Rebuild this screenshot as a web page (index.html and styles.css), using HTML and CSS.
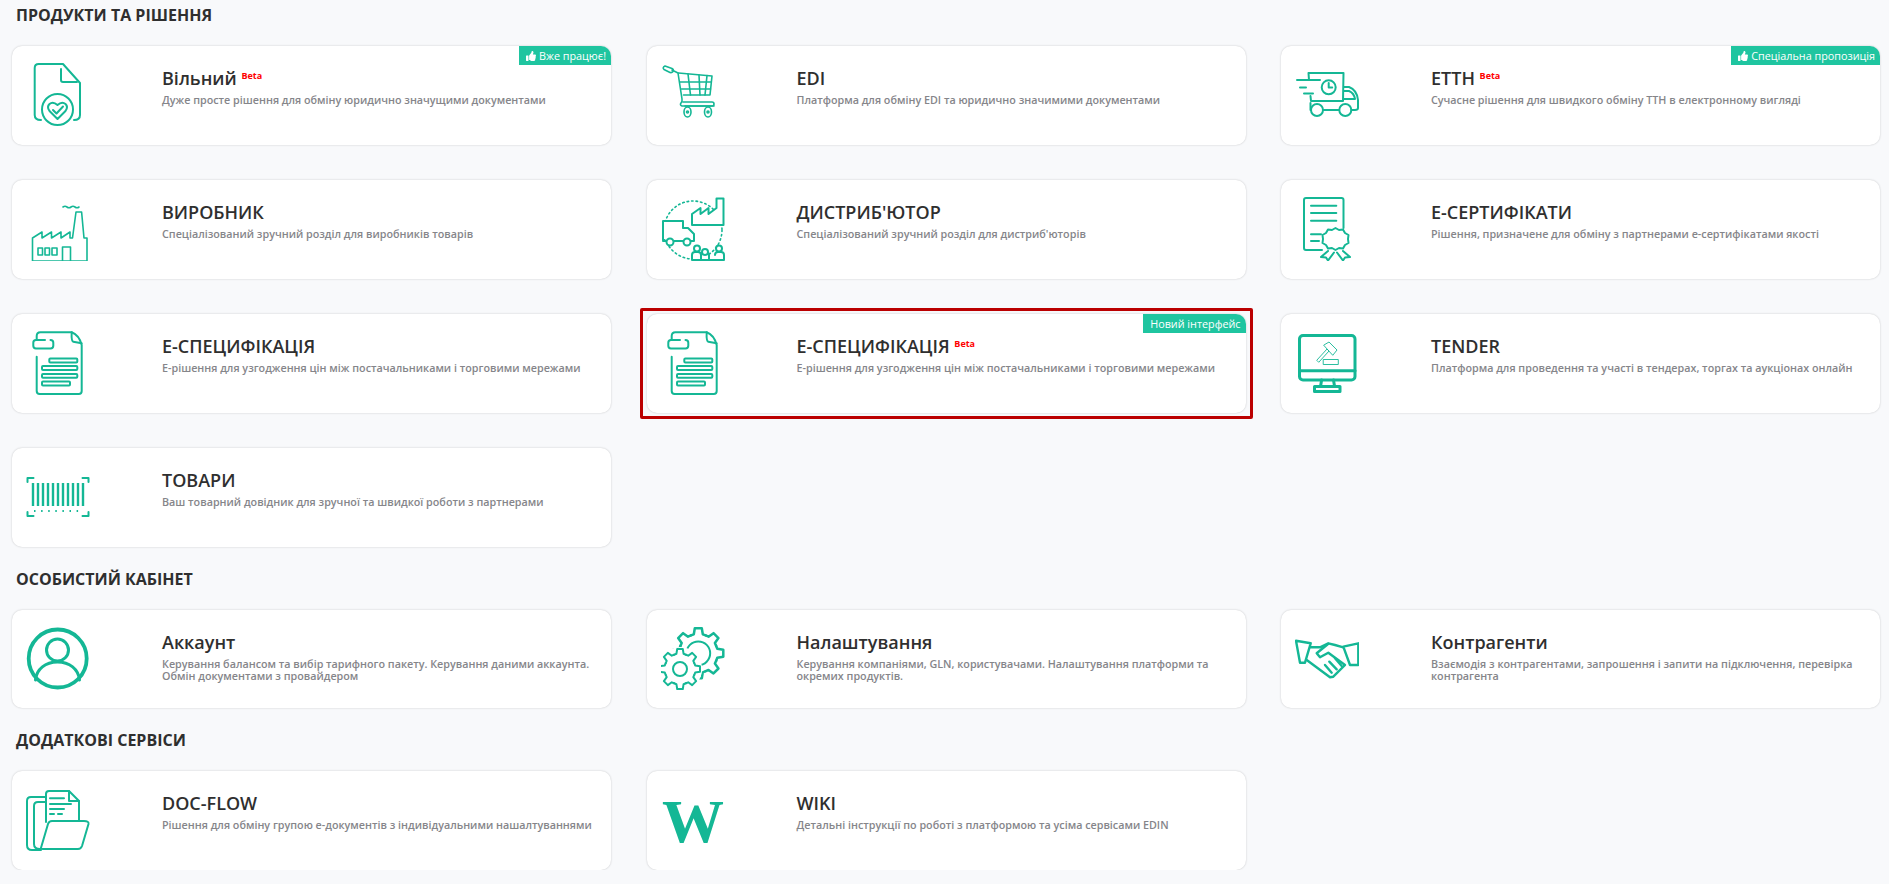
FILE: index.html
```html
<!DOCTYPE html>
<html lang="uk">
<head>
  <meta charset="UTF-8" />
  <title>EDIN</title>
  <link rel="stylesheet" href="styles.css">
</head>
<body>

  <!-- shared thumbs-up for the ribbons -->
  <svg class="defs" width="0" height="0">
    <symbol id="thumb" viewBox="0 0 512 512">
      <path d="M104 224H24c-13.255 0-24 10.745-24 24v240c0 13.255 10.745 24 24 24h80c13.255 0 24-10.745 24-24V248c0-13.255-10.745-24-24-24zM384 81.452c0 42.416-25.97 66.208-33.277 94.548h101.723c33.397 0 59.397 27.746 59.553 58.098.084 17.938-7.546 37.249-19.439 49.197l-.11.11c9.836 23.337 8.237 56.037-9.308 79.469 8.681 25.895-.069 57.704-16.382 74.757 4.298 17.598 2.244 32.575-6.148 44.632C440.202 511.587 389.616 512 346.839 512l-2.845-.001c-48.287-.017-87.806-17.598-119.56-31.725-15.957-7.099-36.821-15.887-52.651-16.178-6.54-.12-11.783-5.457-11.783-11.998v-213.77c0-3.2 1.282-6.271 3.558-8.521 39.614-39.144 56.648-80.587 89.117-113.111 14.804-14.832 20.188-37.236 25.393-58.902C282.515 39.293 291.817 0 312 0c24 0 72 8 72 81.452z"/>
    </symbol>
    <symbol id="spec" viewBox="0 0 64 64">
      <path d="M10.700 9V5q0-3.700 3.700-3.700h31.300Q53 4 55.700 14v46q0 3-3 3H13.700q-3 0-3-3V25.700"/>
      <path d="M45.700 1.300q-.5 9 1.600 9.400l8.400 1.600"/>
      <path d="M19 9H10q-2.700 0-2.700 2.700v3q0 2.700 2.700 2.700h14.500q2.800 0 2.800-2.700v-3q0-2.700-2.800-2.700"/>
      <rect x="23.300" y="27.500" width="28" height="4" rx="1"/>
      <rect x="16" y="35" width="35.300" height="4" rx="1"/>
      <rect x="16" y="43" width="35.300" height="3.700" rx="1"/>
      <rect x="16" y="50.500" width="28" height="4" rx="1"/>
    </symbol>
    <g id="cog-tooth">
      <path d="M-5.900-14.300L-3.600-15.200-2.800-20H2.800L3.600-15.200 5.900-14.300"/>
    </g>
  </svg>

  <h2 class="section-title section-title-first">ПРОДУКТИ ТА РІШЕННЯ</h2>
  <section class="cards">

    <a class="card">
      <svg class="icon" viewBox="0 0 64 64">
        <path d="M15 57q-6.300 0-6.300-5V5q0-4 4-4H37l17 19v32q0 5-6 5"/>
        <path d="M35 6v11q0 2 2 2h14"/>
        <circle cx="31.500" cy="46.500" r="15.500"/>
        <path d="M31.500 56l-8-8q-3-4 0-7 3.500-3 8 1 4.500-4 8-1 3 3 0 7z"/>
        <path d="M27 47l3.500 3.500 6.500-7"/>
      </svg>
      <div class="card-body">
        <h3 class="card-title">Вільний <span class="beta">Beta</span></h3>
        <p class="card-text">Дуже просте рішення для обміну юридично значущими документами</p>
      </div>
      <span class="ribbon"><svg class="thumb"><use href="#thumb"/></svg> Вже працює!</span>
    </a>

    <a class="card">
      <svg class="icon icon-thin" viewBox="0 0 64 64">
        <path d="M4 3l7 2.500q2 1 1 3-1 1.500-3 1L3 6.500q-2-2 1-3.500z"/>
        <path d="M11 7l6 3 4 26q.5 3-1 4-1.500 2 1 3h32"/>
        <path d="M17.500 10L51 13l-2 19H22.500"/>
        <path d="M19 19h31M20.500 26h29M27 11l2.500 21M38 12l1 20M46 12.500L44 32"/>
        <path d="M22 39h29q2 0 2 2t-2 2H24"/>
        <ellipse cx="26.500" cy="49" rx="3.500" ry="5"/>
        <ellipse cx="47" cy="49" rx="3.500" ry="5"/>
        <circle cx="26.500" cy="49" r="1"/>
        <circle cx="47" cy="49" r="1"/>
      </svg>
      <div class="card-body">
        <h3 class="card-title">EDI</h3>
        <p class="card-text">Платформа для обміну EDI та юридично значимими документами</p>
      </div>
    </a>

    <a class="card">
      <svg class="icon" viewBox="0 0 64 64">
        <path d="M14 17l-.5-7h35l-.500 28H16l-.5-5"/>
        <path d="M2 17h23M5 24.500h6M9 30.500h9"/>
        <circle cx="33.700" cy="24.300" r="7"/>
        <path d="M33.700 20v4.500h3.500"/>
        <path d="M49 24h5q8 3 9 13v8q0 2-3 2h-3.500M49 28h5q5 2 6 8h-11"/>
        <path d="M28 47h16"/>
        <path d="M15.500 40v7h.5"/>
        <circle cx="22" cy="47" r="6"/>
        <circle cx="50.300" cy="47" r="6"/>
      </svg>
      <div class="card-body">
        <h3 class="card-title">ЕТТН <span class="beta">Beta</span></h3>
        <p class="card-text">Сучасне рішення для швидкого обміну ТТН в електронному вигляді</p>
      </div>
      <span class="ribbon"><svg class="thumb"><use href="#thumb"/></svg> Спеціальна пропозиція</span>
    </a>

    <a class="card">
      <svg class="icon icon-thin" viewBox="0 0 64 64">
        <path d="M6.500 64V41L16 35v6l9.500-6v6L35 35v6l9-6v6h2.500L50 15h5.600L58 41h3v23z"/>
        <path d="M37 10q2-1.500 4 0t4 0 4 0 4 0"/>
        <rect x="12" y="51" width="4.500" height="7"/>
        <rect x="19" y="51" width="4.500" height="7"/>
        <rect x="26" y="51" width="5" height="7"/>
        <path d="M36.500 64V50h8v14"/>
      </svg>
      <div class="card-body">
        <h3 class="card-title">ВИРОБНИК</h3>
        <p class="card-text">Спеціалізований зручний розділ для виробників товарів</p>
      </div>
    </a>

    <a class="card">
      <svg class="icon" viewBox="0 0 64 64">
        <circle class="dots" cx="32" cy="33" r="29"/>
        <path class="white" d="M31 28V17l8.500-6v6l8-6v6l8-6V1.500h7V28z"/>
        <path class="white" d="M2 24h20v19H2z"/>
        <path class="white" d="M22 31h5l6 6v7H2"/>
        <circle class="white" cx="9" cy="45" r="3.500"/>
        <circle class="white" cx="26" cy="45" r="3.500"/>
        <path class="white" d="M31 63v-5q0-3 3-3h3q3 0 3 3v5zM40 58q0-3 3-3h2q3 0 3 3v5h-8zM48 58v5h15v-5q0-3-3-3h-3q-3 0-3 3"/>
        <circle class="white" cx="36" cy="51.500" r="3"/>
        <circle class="white" cx="44" cy="55" r="3"/>
        <circle class="white" cx="58" cy="51.500" r="3"/>
      </svg>
      <div class="card-body">
        <h3 class="card-title">ДИСТРИБ'ЮТОР</h3>
        <p class="card-text">Спеціалізований зручний розділ для дистриб'юторів</p>
      </div>
    </a>

    <a class="card">
      <svg class="icon" viewBox="0 0 64 64">
        <path d="M27 53H11q-2 0-2-2V3q0-2 2-2h35.500q2 0 2 2v28"/>
        <path d="M16 8.700h25.300M16 16h25.300M16 23.700h25.300M16 37.300h10M16 44h8"/>
        <path class="white" d="M40.500 31l3.500 2 4-.5 2 3.500 3.500 2-.5 4 .5 4-3.500 2-2 3.500-4-.5-3.500 2-3.500-2-4 .5-2-3.500-3.500-2 .5-4-.5-4 3.500-2 2-3.500 4 .5z"/>
        <path d="M33 54l-7 6 5 .5 2 3 6-8M48 54l7 6-5 .5-2 3-6-8"/>
      </svg>
      <div class="card-body">
        <h3 class="card-title">Е-СЕРТИФІКАТИ</h3>
        <p class="card-text">Рішення, призначене для обміну з партнерами е-сертифікатами якості</p>
      </div>
    </a>

    <a class="card">
      <svg class="icon"><use href="#spec"/></svg>
      <div class="card-body">
        <h3 class="card-title">Е-СПЕЦИФІКАЦІЯ</h3>
        <p class="card-text">Е-рішення для узгодження цін між постачальниками і торговими мережами</p>
      </div>
    </a>

    <a class="card card-marked">
      <svg class="icon"><use href="#spec"/></svg>
      <div class="card-body">
        <h3 class="card-title">Е-СПЕЦИФІКАЦІЯ <span class="beta">Beta</span></h3>
        <p class="card-text">Е-рішення для узгодження цін між постачальниками і торговими мережами</p>
      </div>
      <span class="ribbon">Новий інтерфейс</span>
    </a>

    <a class="card">
      <svg class="icon" viewBox="0 0 64 64">
        <rect x="4.500" y="4.500" width="55.500" height="44.500" rx="3.500" class="heavy"/>
        <path class="heavy" d="M4.500 39.700H60"/>
        <path class="heavy" d="M26.600 49l-1 6M38.500 49l1 6"/>
        <rect class="heavy" x="19.500" y="55.500" width="25.500" height="5"/>
        <path class="hair" d="M22 29l10-11 2 2-10 11zM29 14l5-3 8 8-4 5z"/>
        <rect class="hair" x="28.600" y="28.500" width="14.700" height="5"/>
      </svg>
      <div class="card-body">
        <h3 class="card-title">TENDER</h3>
        <p class="card-text">Платформа для проведення та участі в тендерах, торгах та аукціонах онлайн</p>
      </div>
    </a>

    <a class="card">
      <svg class="icon" viewBox="0 0 64 64">
        <path d="M1.500 17v-4h6M56.500 13h6v4M1.500 47v4h6M56.500 51h6v-4"/>
        <path class="bars" d="M7 18v23M12 18v23M17 18v23M22 18v23M27 18v23M32 18v23M37 18v23M42 18v23M47 18v23M52 18v23M57 18v23"/>
        <path class="dashes" d="M8 46h48"/>
      </svg>
      <div class="card-body">
        <h3 class="card-title">ТОВАРИ</h3>
        <p class="card-text">Ваш товарний довідник для зручної та швидкої роботи з партнерами</p>
      </div>
    </a>
  </section>

  <h2 class="section-title">ОСОБИСТИЙ КАБІНЕТ</h2>
  <section class="cards">

    <a class="card">
      <svg class="icon" viewBox="0 0 64 64">
        <circle class="account" cx="31.700" cy="31.500" r="29"/>
        <circle class="heavy" cx="31.500" cy="23" r="11"/>
        <path class="heavy" d="M9.500 53c1-11 10-18 22-18s21 7 22 18"/>
      </svg>
      <div class="card-body">
        <h3 class="card-title">Аккаунт</h3>
        <p class="card-text">Керування балансом та вибір тарифного пакету. Керування даними аккаунта. Обмін документами з провайдером</p>
      </div>
    </a>

    <a class="card">
      <svg class="icon" viewBox="0 0 64 64">
        <g transform="translate(37.300 26.300) scale(1.250)" class="cog">
          <use href="#cog-tooth"/>
          <use href="#cog-tooth" transform="rotate(45)"/>
          <use href="#cog-tooth" transform="rotate(90)"/>
          <use href="#cog-tooth" transform="rotate(135)"/>
          <use href="#cog-tooth" transform="rotate(180)"/>
          <use href="#cog-tooth" transform="rotate(225)"/>
          <use href="#cog-tooth" transform="rotate(270)"/>
          <use href="#cog-tooth" transform="rotate(315)"/>
          <circle r="9.500"/>
        </g>
        <circle class="cover" cx="19" cy="42" r="22"/>
        <g transform="translate(19 42)">
          <use href="#cog-tooth"/>
          <use href="#cog-tooth" transform="rotate(45)"/>
          <use href="#cog-tooth" transform="rotate(90)"/>
          <use href="#cog-tooth" transform="rotate(135)"/>
          <use href="#cog-tooth" transform="rotate(180)"/>
          <use href="#cog-tooth" transform="rotate(225)"/>
          <use href="#cog-tooth" transform="rotate(270)"/>
          <use href="#cog-tooth" transform="rotate(315)"/>
          <circle r="7"/>
        </g>
      </svg>
      <div class="card-body">
        <h3 class="card-title">Налаштування</h3>
        <p class="card-text">Керування компаніями, GLN, користувачами. Налаштування платформи та окремих продуктів.</p>
      </div>
    </a>

    <a class="card">
      <svg class="icon icon-bold" viewBox="0 0 64 64">
        <path d="M1 13.700l14.700 2.600L10 35.700H5zM63.300 16.300V38H55l-6.700-18.300z"/>
        <path d="M15.700 20.300H25l8.300-4L40 18l8.300 2.300"/>
        <path d="M33 17l-11.300 9.300 3.300 4 8.300-4.600L50 38 38.300 49.700 35 50.300 11.700 33"/>
        <path d="M30 38l6.700 7.700M34.300 34.700l7.400 7.600M40 31.300l6.700 7.700"/>
      </svg>
      <div class="card-body">
        <h3 class="card-title">Контрагенти</h3>
        <p class="card-text">Взаємодія з контрагентами, запрошення і запити на підключення, перевірка контрагента</p>
      </div>
    </a>
  </section>

  <h2 class="section-title">ДОДАТКОВІ СЕРВІСИ</h2>
  <section class="cards">

    <a class="card">
      <svg class="icon" viewBox="0 0 64 64">
        <path d="M20 9H5q-4 0-4 4v44q0 5 5 5h9"/>
        <path d="M20 14h-8q-4 0-4 4v38q0 5 6 5"/>
        <path d="M20 34V6q0-3 3-3h20l10 10v20"/>
        <path d="M43 3v10h10"/>
        <path d="M24 10.300h14M24 16h21M24 21h14M24 26h4M32 26h4"/>
        <path d="M14.800 60.500L22 36q1-3 4-3h32q5 0 4.500 3L56 58q-1 3-4 3H17q-2.500 0-2.200-.5z"/>
      </svg>
      <div class="card-body">
        <h3 class="card-title">DOC-FLOW</h3>
        <p class="card-text">Рішення для обміну групою е-документів з індивідуальними нашалтуваннями</p>
      </div>
    </a>

    <a class="card">
      <svg class="icon" viewBox="0 0 64 64"><text class="wiki" x="32" y="54">W</text></svg>
      <div class="card-body">
        <h3 class="card-title">WIKI</h3>
        <p class="card-text">Детальні інструкції по роботі з платформою та усіма сервісами EDIN</p>
      </div>
    </a>
  </section>

</body>
</html>
```

FILE: styles.css
```css
body {
  margin: 0;
  padding: 4px 0 0 12px;
  background: #f8f9fb;
  font-family: "Open Sans", sans-serif;
  color: #2f2f2f;
}
.defs {
  position: absolute;
}
.section-title {
  margin: 21px 0 20px 4px;
  font-size: 16px;
  line-height: 22px;
  font-weight: 700;
}
.section-title-first {
  margin-top: 0;
}
.cards {
  display: grid;
  grid-template-columns: repeat(3, 599px);
  column-gap: 35.500px;
  row-gap: 35.500px;
}
.card {
  position: relative;
  display: flex;
  align-items: center;
  box-sizing: border-box;
  height: 98.500px;
  padding-left: 14px;
  background: #fff;
  border-radius: 10px;
  box-shadow: 0 0 2px rgba(0, 0, 0, .22);
}
.card-marked::after {
  content: "";
  position: absolute;
  inset: -6px -7px -6px -7px;
  border: 3px solid #bb0000;
  border-radius: 2px;
}
.card-body {
  align-self: flex-start;
  margin-left: 72px;
  padding: 20px 10px 0 0;
}
.card-title {
  margin: 0;
  font-size: 18px;
  line-height: 24px;
  font-weight: 600;
  color: #2f2f2f;
}
.card-text {
  margin: 4px 0 0;
  font-size: 10.750px;
  line-height: 12px;
  font-weight: 600;
  color: #85858a;
}
.beta {
  position: relative;
  top: -6px;
  font-size: 9px;
  line-height: 0;
  font-weight: 700;
  color: #f00;
}
.ribbon {
  position: absolute;
  top: 0;
  right: 0;
  display: flex;
  align-items: center;
  gap: 3px;
  height: 19px;
  padding: 0 5px 0 7px;
  background: #1fc5a0;
  border-radius: 0 10px 0 0;
  font-size: 10.800px;
  color: #fff;
}
.thumb {
  width: 10px;
  height: 10px;
  fill: #fff;
}

/* line icons */
.icon {
  flex: none;
  width: 64px;
  height: 64px;
  fill: none;
  stroke: #14b795;
  stroke-width: 2;
  stroke-linejoin: round;
  stroke-linecap: round;
}
.icon-thin {
  stroke-width: 1.600;
}
.icon-bold {
  stroke-width: 2.400;
}
.heavy {
  stroke-width: 3;
}
.account {
  stroke-width: 3.800;
}
.hair {
  stroke-width: .9;
}
.white {
  fill: #fff;
}
.dots {
  stroke-width: 1.600;
  stroke-dasharray: 1.500 3;
}
.bars {
  stroke-width: 2.400;
  stroke-linecap: butt;
}
.dashes {
  stroke-dasharray: 1.500 5.600;
  stroke-linecap: butt;
}
.cog path,
.cog circle {
  stroke-width: 1.600;
}
.cover {
  fill: #fff;
  stroke: none;
}
.wiki {
  font-family: "Liberation Serif", serif;
  font-size: 62px;
  font-weight: 700;
  text-anchor: middle;
  fill: #14b795;
  stroke: none;
}
```
